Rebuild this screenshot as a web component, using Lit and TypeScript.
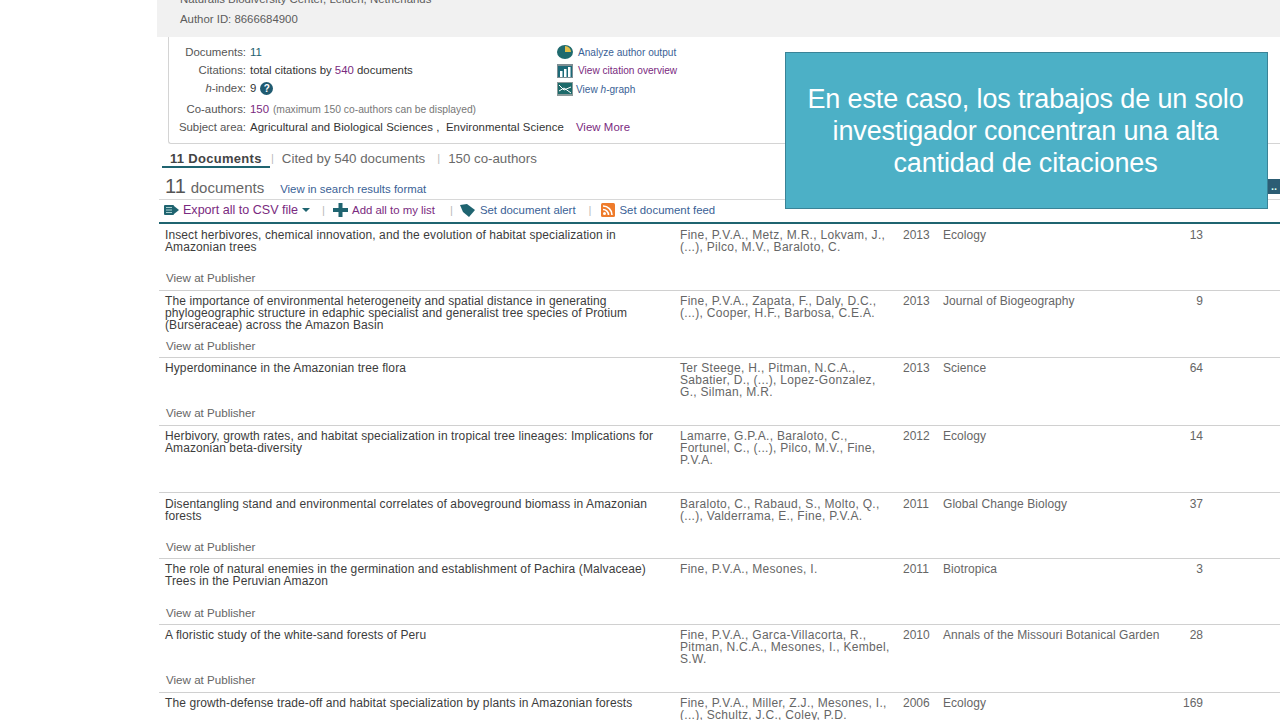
import { LitElement, html, css } from "lit";
import { customElement } from "lit/decorators.js";

interface Doc { t: string[]; a: string[]; y: string; s: string; c: string; pub: boolean; h: number; pt: number; pb: number; }

const docs: Doc[] = [
  { t: ["Insect herbivores, chemical innovation, and the evolution of habitat specialization in", "Amazonian trees"], a: ["Fine, P.V.A., Metz, M.R., Lokvam, J.,", "(...), Pilco, M.V., Baraloto, C."], y: "2013", s: "Ecology", c: "13", pub: true, h: 67, pt: 5, pb: 6 },
  { t: ["The importance of environmental heterogeneity and spatial distance in generating", "phylogeographic structure in edaphic specialist and generalist tree species of Protium", "(Burseraceae) across the Amazon Basin"], a: ["Fine, P.V.A., Zapata, F., Daly, D.C.,", "(...), Cooper, H.F., Barbosa, C.E.A."], y: "2013", s: "Journal of Biogeography", c: "9", pub: true, h: 67, pt: 4, pb: 5 },
  { t: ["Hyperdominance in the Amazonian tree flora"], a: ["Ter Steege, H., Pitman, N.C.A.,", "Sabatier, D., (...), Lopez-Gonzalez,", "G., Silman, M.R."], y: "2013", s: "Science", c: "64", pub: true, h: 68, pt: 4, pb: 6 },
  { t: ["Herbivory, growth rates, and habitat specialization in tropical tree lineages: Implications for", "Amazonian beta-diversity"], a: ["Lamarre, G.P.A., Baraloto, C.,", "Fortunel, C., (...), Pilco, M.V., Fine,", "P.V.A."], y: "2012", s: "Ecology", c: "14", pub: false, h: 67, pt: 4, pb: 5 },
  { t: ["Disentangling stand and environmental correlates of aboveground biomass in Amazonian", "forests"], a: ["Baraloto, C., Rabaud, S., Molto, Q.,", "(...), Valderrama, E., Fine, P.V.A."], y: "2011", s: "Global Change Biology", c: "37", pub: true, h: 66, pt: 5, pb: 5 },
  { t: ["The role of natural enemies in the germination and establishment of Pachira (Malvaceae)", "Trees in the Peruvian Amazon"], a: ["Fine, P.V.A., Mesones, I."], y: "2011", s: "Biotropica", c: "3", pub: true, h: 66, pt: 4, pb: 5 },
  { t: ["A floristic study of the white-sand forests of Peru"], a: ["Fine, P.V.A., Garca-Villacorta, R.,", "Pitman, N.C.A., Mesones, I., Kembel,", "S.W."], y: "2010", s: "Annals of the Missouri Botanical Garden", c: "28", pub: true, h: 68, pt: 4, pb: 6 },
  { t: ["The growth-defense trade-off and habitat specialization by plants in Amazonian forests"], a: ["Fine, P.V.A., Miller, Z.J., Mesones, I.,", "(...), Schultz, J.C., Coley, P.D."], y: "2006", s: "Ecology", c: "169", pub: false, h: 40, pt: 4, pb: 5 },
];

const lines = (l: string[]) => l.map((x) => html`<div>${x}</div>`);

@customElement("app-root")
export class AppRoot extends LitElement {
  static styles = css`
    :host { display: block; width: 1280px; height: 720px; overflow: hidden; position: relative; background: #fff; font-family: "Liberation Sans", Arial, sans-serif; color: #3a3a3a; font-size: 11.4px; }
    .page { margin-left: 157px; display: flex; flex-direction: column; height: 720px; overflow: hidden; }
    .head { height: 37px; flex: none; background: #f1f1f1; padding-left: 23px; color: #5c5c5c; font-size: 11.4px; overflow: hidden; }
    .head .aff { height: 12px; margin-top: -7px; line-height: 12px; }
    .head .aid { margin-top: 7px; line-height: 14px; }
    .panel { height: 107px; flex: none; display: flex; margin-left: 11px; border-left: 1px solid #d4d4d4; border-bottom: 1px solid #d4d4d4; border-bottom-left-radius: 3px; box-sizing: border-box; }
    .stats { width: 388px; flex: none; padding-top: 6px; }
    .stat { display: flex; height: 18px; align-items: center; white-space: nowrap; }
    .stat.gap { margin-top: 3px; }
    .lab { width: 77px; text-align: right; margin-right: 4px; flex: none; color: #555; }
    .val { color: #333; display: flex; align-items: center; white-space: pre; }
    .val.wide { letter-spacing: 0.07px; }
    .pur { color: #7a2a80; }
    .teal { color: #23606f; }
    .small { font-size: 10.3px; color: #777; margin-left: 1px; }
    .more { color: #7a2a80; margin-left: 12px; }
    .q { width: 13px; height: 13px; margin-left: 4px; border-radius: 50%; background: #1f5a70; color: #fff; font-size: 10px; font-weight: bold; display: flex; align-items: center; justify-content: center; }
    .tools { display: flex; flex-direction: column; padding-top: 6px; font-size: 10.1px; }
    .tool { display: flex; align-items: center; height: 18.6px; gap: 5px; white-space: nowrap; }
    .tool.near { gap: 3px; }
    .tool svg { flex: none; }
    .blue { color: #3a5f96; }
    .tabs { height: 27px; flex: none; display: flex; align-items: flex-start; padding-left: 5px; box-sizing: border-box; font-size: 13.3px; color: #6a6a6a; padding-top: 7px; }
    .tab { height: 17px; line-height: 15px; white-space: nowrap; }
    .tab.on { font-weight: bold; color: #444; border-bottom: 2px solid #1f6470; width: 100px; height: 15px; padding-left: 8px; font-size: 13px; letter-spacing: 0.3px; }
    .sep { color: #bbb; font-size: 11px; line-height: 15px; }
    .s1 { margin: 0 8px 0 1px; }
    .s2 { margin: 0 8px 0 12px; }
    .title { height: 29px; flex: none; display: flex; align-items: baseline; padding: 4px 0 0 6px; box-sizing: border-box; border-bottom: 1px solid #d8d8d8; margin-left: 2px; }
    .title .n { font-size: 20px; color: #555; }
    .title .d { font-size: 15px; color: #666; margin-left: 5px; }
    .title a { font-size: 11.4px; color: #3a5f96; margin-left: 16px; }
    .actions { height: 24px; flex: none; display: flex; align-items: center; margin-left: 2px; padding: 0 0 2px 5px; box-sizing: border-box; border-bottom: 2px solid #1f6470; font-size: 11.4px; white-space: nowrap; }
    .export { font-size: 12.55px; margin-left: 4px; }
    .caret { margin-left: 4px; }
    .a-sep { color: #bbb; }
    .as1 { margin: 0 8px 0 12px; }
    .as2 { margin: 0 7px 0 15px; }
    .as3 { margin: 0 9px 0 13px; }
    .ml4 { margin-left: 4px; }
    .ml5 { margin-left: 5px; }
    .row { margin-left: 2px; border-bottom: 1px solid #d0d0d0; display: grid; grid-template-columns: 515px 223px 40px 220px 40px; box-sizing: border-box; padding-left: 6px; line-height: 12px; font-size: 12px; color: #666; position: relative; flex: none; }
    .row .t { color: #3c3c3c; white-space: nowrap; letter-spacing: 0.1px; }
    .row .a { white-space: nowrap; letter-spacing: 0.3px; }
    .row .y, .row .s { white-space: nowrap; }
    .row .s { letter-spacing: 0.06px; }
    .row .c { text-align: right; }
    .pub { position: absolute; left: 7px; font-size: 11.6px; color: #666; }
    .callout { position: absolute; left: 785px; top: 52px; width: 483px; height: 157px; box-sizing: border-box; background: #4cb0c6; border: 1px solid #3a8397; color: #fff; font-size: 27px; line-height: 32px; text-align: center; padding: 30px 12px 0 10px; }
    .callout div { white-space: nowrap; letter-spacing: -0.14px; }
    .dots { position: absolute; left: 1268px; top: 179px; width: 12px; height: 15px; background: #2c5d74; color: #dfe; font-size: 11px; line-height: 14px; font-weight: bold; text-align: center; }
  `;

  render() {
    return html`
      <div class="page">
        <div class="head">
          <div class="aff">Naturalis Biodiversity Center, Leiden, Netherlands</div>
          <div class="aid">Author ID: 8666684900</div>
        </div>
        <div class="panel">
          <div class="stats">
            <div class="stat"><span class="lab">Documents:</span><span class="val teal">11</span></div>
            <div class="stat"><span class="lab">Citations:</span><span class="val">total citations by <span class="pur">540</span> documents</span></div>
            <div class="stat"><span class="lab"><i>h</i>-index:</span><span class="val">9<span class="q">?</span></span></div>
            <div class="stat gap"><span class="lab">Co-authors:</span><span class="val"><span class="pur">150</span><span class="small"> (maximum 150 co-authors can be displayed)</span></span></div>
            <div class="stat"><span class="lab">Subject area:</span><span class="val wide">Agricultural and Biological Sciences ,  Environmental Science<span class="more">View More</span></span></div>
          </div>
          <div class="tools">
            <div class="tool blue">
              <svg width="16" height="14" viewBox="0 0 16 14"><ellipse cx="8" cy="7" rx="8" ry="7" fill="#1f6a6e"/><path d="M8 7V1a6 6 0 0 1 6 6z" fill="#e3c04a"/></svg>
              <span>Analyze author output</span>
            </div>
            <div class="tool pur">
              <svg width="16" height="14" viewBox="0 0 16 14"><rect width="16" height="14" fill="#7f8f94"/><rect x="1" y="2" width="14" height="11" fill="#1c6a78"/><rect x="3" y="7" width="2.5" height="6" fill="#fff"/><rect x="7" y="5" width="2.5" height="8" fill="#fff"/><rect x="11" y="3" width="2.5" height="10" fill="#fff"/></svg>
              <span>View citation overview</span>
            </div>
            <div class="tool blue near">
              <svg width="16" height="14" viewBox="0 0 16 14"><rect width="16" height="14" fill="#8a9a9a"/><rect x="1" y="1" width="14" height="11" fill="#1c6a6a"/><path d="M2 3l5 5 7-3M2 9l5-3 7 5" stroke="#fff" stroke-width="1" fill="none"/></svg>
              <span>View <i>h</i>-graph</span>
            </div>
          </div>
        </div>
        <div class="tabs">
          <span class="tab on">11 Documents</span>
          <span class="sep s1">|</span>
          <span class="tab">Cited by 540 documents</span>
          <span class="sep s2">|</span>
          <span class="tab">150 co-authors</span>
        </div>
        <div class="title">
          <span class="n">11</span><span class="d">documents</span><a>View in search results format</a>
        </div>
        <div class="actions">
          <svg width="15" height="12" viewBox="0 0 15 12"><rect x="0" y="1" width="10" height="10" rx="1" fill="#1f6470"/><path d="M2 3.500h6M2 6h6M2 8.500h6" stroke="#a9cfd0" stroke-width="1"/><path d="M10 2l5 4-5 4z" fill="#1f6470"/></svg>
          <span class="pur export">Export all to CSV file</span>
          <svg class="caret" width="8" height="5" viewBox="0 0 8 5"><path d="M0 0h8L4 4z" fill="#1f6470"/></svg>
          <span class="a-sep as1">|</span>
          <svg width="15" height="14" viewBox="0 0 15 14"><path d="M5.500 0h4v5H15v4H9.500v5h-4V9H0V5h5.500z" fill="#1f6470"/></svg>
          <span class="pur ml4">Add all to my list</span>
          <span class="a-sep as2">|</span>
          <svg width="15" height="13" viewBox="0 0 15 13"><path d="M0 1l7-1 8 6-6 7-6-5z" fill="#1f6470"/></svg>
          <span class="blue ml5">Set document alert</span>
          <span class="a-sep as3">|</span>
          <svg width="14" height="14" viewBox="0 0 14 14"><rect width="14" height="14" rx="1.500" fill="#ee7b2b"/><circle cx="3.500" cy="10.500" r="1.500" fill="#fff"/><path d="M2 6.500a5.500 5.500 0 0 1 5.500 5.500M2 3a9 9 0 0 1 9 9" stroke="#fff" stroke-width="1.600" fill="none"/></svg>
          <span class="blue ml5">Set document feed</span>
        </div>
        ${docs.map((d) => html`
          <div class="row" style="height:${d.h}px; padding-top:${d.pt}px">
            <div class="t">${lines(d.t)}</div>
            <div class="a">${lines(d.a)}</div>
            <div class="y">${d.y}</div>
            <div class="s">${d.s}</div>
            <div class="c">${d.c}</div>
            ${d.pub ? html`<div class="pub" style="bottom:${d.pb}px">View at Publisher</div>` : ""}
          </div>`)}
      </div>
      <div class="dots">..</div>
      <div class="callout">
        <div>En este caso, los trabajos de un solo</div>
        <div>investigador concentran una alta</div>
        <div>cantidad de citaciones</div>
      </div>
    `;
  }
}
